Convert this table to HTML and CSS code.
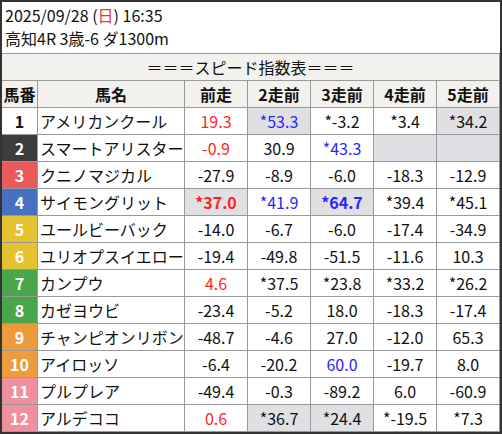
FILE: index.html
```html
<!DOCTYPE html>
<html lang="ja">
<head>
<meta charset="utf-8">
<link rel="stylesheet" href="styles.css">
</head>
<body>
<div class="frame">
  <div class="info">
    <div>2025/09/28 (<span class="sun">日</span>) 16:35</div>
    <div>高知4R 3歳-6 ダ1300m</div>
  </div>
  <div class="sheet">
    <div class="c title">＝＝＝スピード指数表＝＝＝</div>
    <div class="c hd">馬番</div><div class="c hd">馬名</div><div class="c hd">前走</div><div class="c hd">2走前</div><div class="c hd">3走前</div><div class="c hd">4走前</div><div class="c hd">5走前</div>

    <div class="c no w1">1</div><div class="c name">アメリカンクール</div><div class="c red">19.3</div><div class="c blue hl">*53.3</div><div class="c">*-3.2</div><div class="c">*3.4</div><div class="c hl">*34.2</div>
    <div class="c no w2">2</div><div class="c name">スマートアリスター</div><div class="c red">-0.9</div><div class="c">30.9</div><div class="c blue">*43.3</div><div class="c hl"></div><div class="c hl"></div>
    <div class="c no w3">3</div><div class="c name">クニノマジカル</div><div class="c">-27.9</div><div class="c">-8.9</div><div class="c">-6.0</div><div class="c">-18.3</div><div class="c">-12.9</div>
    <div class="c no w4">4</div><div class="c name">サイモングリット</div><div class="c red hl b">*37.0</div><div class="c blue">*41.9</div><div class="c blue hl b">*64.7</div><div class="c">*39.4</div><div class="c">*45.1</div>
    <div class="c no w5">5</div><div class="c name">ユールビーバック</div><div class="c">-14.0</div><div class="c">-6.7</div><div class="c">-6.0</div><div class="c">-17.4</div><div class="c">-34.9</div>
    <div class="c no w5">6</div><div class="c name">ユリオプスイエロー</div><div class="c">-19.4</div><div class="c">-49.8</div><div class="c">-51.5</div><div class="c">-11.6</div><div class="c">10.3</div>
    <div class="c no w6">7</div><div class="c name">カンプウ</div><div class="c red">4.6</div><div class="c">*37.5</div><div class="c">*23.8</div><div class="c">*33.2</div><div class="c">*26.2</div>
    <div class="c no w6">8</div><div class="c name">カゼヨウビ</div><div class="c">-23.4</div><div class="c">-5.2</div><div class="c">18.0</div><div class="c">-18.3</div><div class="c">-17.4</div>
    <div class="c no w7">9</div><div class="c name">チャンピオンリボン</div><div class="c">-48.7</div><div class="c">-4.6</div><div class="c">27.0</div><div class="c">-12.0</div><div class="c">65.3</div>
    <div class="c no w7">10</div><div class="c name">アイロッソ</div><div class="c">-6.4</div><div class="c">-20.2</div><div class="c blue">60.0</div><div class="c">-19.7</div><div class="c">8.0</div>
    <div class="c no w8">11</div><div class="c name">プルプレア</div><div class="c">-49.4</div><div class="c">-0.3</div><div class="c">-89.2</div><div class="c">6.0</div><div class="c">-60.9</div>
    <div class="c no w8">12</div><div class="c name">アルデココ</div><div class="c red">0.6</div><div class="c hl">*36.7</div><div class="c hl">*24.4</div><div class="c">*-19.5</div><div class="c">*7.3</div>
  </div>
</div>
</body>
</html>
```
FILE: styles.css
```css
html, body {
  margin: 0;
  padding: 0;
  background: #fff;
}
body {
  font-family: "Noto Sans CJK JP", "Noto Sans", sans-serif;
  font-size: 16px;
  color: #111;
}
.frame {
  width: 502px;
  height: 434px;
  box-sizing: border-box;
  border: 2px solid #333;
  background: #fff;
}
.info {
  padding: 2px 3px 3px;
  line-height: 23px;
}
.sun {
  color: #e8383d;
}
.sheet {
  display: grid;
  grid-template-columns: 35px 146px repeat(5, 62px);
  grid-auto-rows: 26px;
  gap: 1px;
  padding: 1px 1px 1px 0;
  background: #999;
}
.c {
  background: #fff;
  display: flex;
  align-items: center;
  justify-content: center;
  line-height: 26px;
  white-space: nowrap;
  overflow: hidden;
}
.title {
  grid-column: 1 / -1;
  background: #f2f1ed;
}
.hd {
  background: #f2f1ed;
  font-weight: bold;
}
.name {
  justify-content: flex-start;
  padding-left: 2px;
}
.no {
  font-weight: bold;
  color: #fff;
}
.w1 { background: #fff; color: #111; }
.w2 { background: #3d3d3d; }
.w3 { background: #e85a5c; }
.w4 { background: #4670c0; }
.w5 { background: #e5c22f; }
.w6 { background: #4aa64c; }
.w7 { background: #ee9b3d; }
.w8 { background: #f0909f; }
.red { color: #ff1f1f; }
.blue { color: #2626ff; }
.hl { background: #dfdfe4; }
.b { font-weight: bold; }
```
